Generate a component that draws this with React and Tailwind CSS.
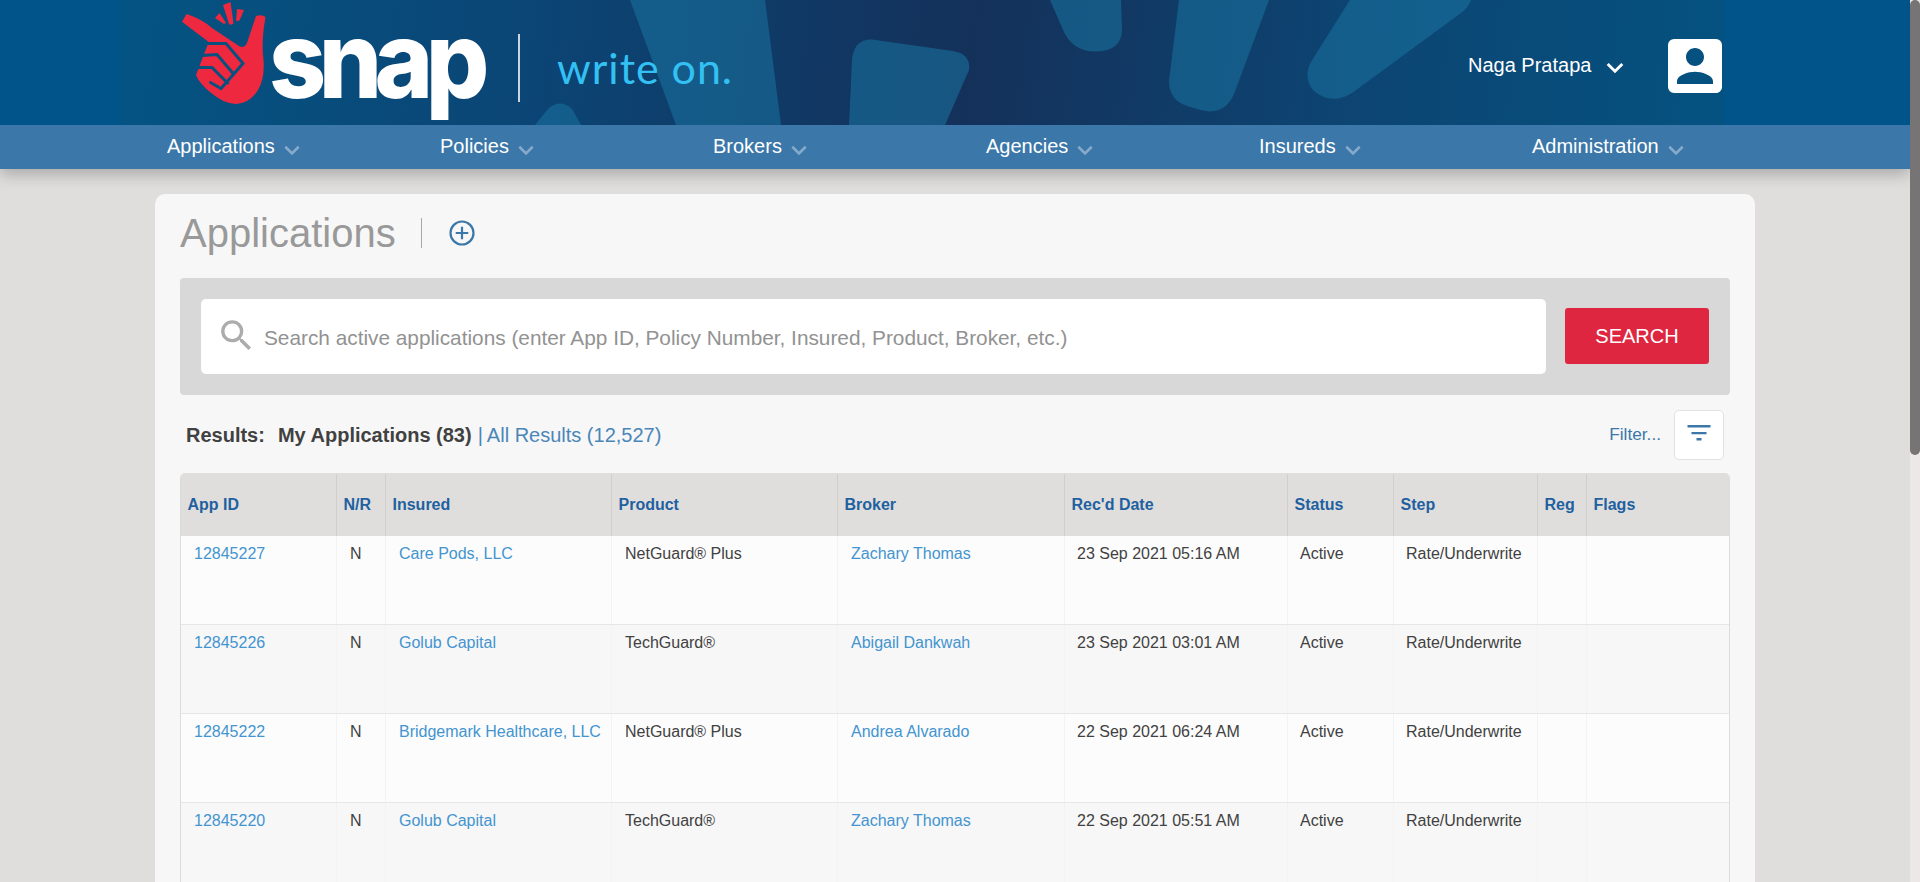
const font = "font-['Liberation_Sans',Arial,sans-serif]";

const NAV = ['Applications', 'Policies', 'Brokers', 'Agencies', 'Insureds', 'Administration'];

const COLUMNS = ['App ID', 'N/R', 'Insured', 'Product', 'Broker', "Rec'd Date", 'Status', 'Step', 'Reg', 'Flags'];

const GRID = 'grid grid-cols-[156px_49px_226px_226px_227px_223px_106px_144px_49px_1fr]';

const ROWS = [
  ['12845227', 'N', 'Care Pods, LLC', 'NetGuard® Plus', 'Zachary Thomas', '23 Sep 2021 05:16 AM', 'Active', 'Rate/Underwrite', '', ''],
  ['12845226', 'N', 'Golub Capital', 'TechGuard®', 'Abigail Dankwah', '23 Sep 2021 03:01 AM', 'Active', 'Rate/Underwrite', '', ''],
  ['12845222', 'N', 'Bridgemark Healthcare, LLC', 'NetGuard® Plus', 'Andrea Alvarado', '22 Sep 2021 06:24 AM', 'Active', 'Rate/Underwrite', '', ''],
  ['12845220', 'N', 'Golub Capital', 'TechGuard®', 'Zachary Thomas', '22 Sep 2021 05:51 AM', 'Active', 'Rate/Underwrite', '', ''],
];

const LINKED = [0, 2, 4];

function Chevron({ className }) {
  return (
    <svg viewBox="0 0 16 11" className={className} fill="none" stroke="currentColor" strokeWidth="2.6">
      <path d="M1.3 1.8 L8 8.4 L14.7 1.8" />
    </svg>
  );
}

function Backdrop() {
  return (
    <svg className="absolute inset-0 h-[125px] w-[1910px]" viewBox="0 0 1910 125">
      <g fill="#196f9c" fillOpacity="0.6">
        <path d="M630 0H765L781 125H676Z" />
        <path d="M535 125L548 109Q560 98 572 109L581 125Z" />
        <path d="M849 125L852 60Q854 39 872 39.500L953 51Q971 54 969 70L945 125Z" />
        <path d="M1050 0L1064 32Q1074 52 1096 51.500Q1122 51 1122 29L1121 0Z" />
        <path d="M1179 0L1169 81Q1169 100 1187 106Q1203 111 1210 111.500Q1227 111 1234 94L1269 0Z" />
        <path d="M1350 0L1311 62Q1303 77 1313 90Q1331 106 1352 93L1461 13Q1469 7 1471 0Z" />
      </g>
    </svg>
  );
}

function Logo() {
  return (
    <svg className="h-[125px] w-[600px] shrink-0 overflow-visible" viewBox="150 0 600 125" role="img" aria-label="snap">
      <path
        fill="#ee293f"
        d="M186.500 14L182 21.700L208.700 42L196 75Q199 83 210 92Q224 104 236 104Q250 103 258 90Q265 78 263.500 60Q261 42 265.500 17Q262 14 256 16Q252 28 247 43Q244 49 239 46L212 28Q202 19 186.500 14Z"
      />
      <g fill="#ee293f">
        <path d="M223 5L230.500 2L233.500 23.500Q231 25.500 229 24Z" />
        <path d="M215 18L219.500 13L226 23L224 24Z" />
        <path d="M237 9L244 10L239.500 20.500L236 21Z" />
      </g>
      <g fill="none" stroke="#08507e" strokeWidth="3">
        <path d="M208 43.500H226L243 63.500L221 88.500L210.500 82.500" strokeLinecap="round" />
        <path d="M202 55.500L217 54.500L234.500 75" />
        <path d="M197 67.500H212L228.500 84" />
      </g>
      <text
        x="269"
        y="97.500"
        fontFamily="Inter, sans-serif"
        fontWeight="800"
        fontSize="107"
        letterSpacing="-8"
        fill="#fff"
        textLength="213"
        lengthAdjust="spacingAndGlyphs"
      >
        snap
      </text>
      <rect x="518" y="34" width="2" height="68" fill="#c9d6e0" />
      <text x="557" y="84" fontFamily="Lato, sans-serif" fontSize="43" fill="#33c1f3" textLength="175" lengthAdjust="spacing">write on.</text>
    </svg>
  );
}

function Header() {
  return (
    <header className="relative z-10 flex h-[125px] shrink-0 bg-[#00548a] pl-[121px]">
      <div className="h-[125px] w-[1603px] bg-[linear-gradient(97deg,#045483_0%,#0b4575_26%,#14315a_53%,#0d4472_76%,#045280_100%)]" />
      <Backdrop />
      <div className="absolute inset-0 flex items-start pl-[150px]">
        <Logo />
        <span className="mt-[54px] ml-[718px] text-[20px] leading-[23px] whitespace-nowrap text-white">Naga Pratapa</span>
        <Chevron className="mt-[62px] ml-[15px] h-[12px] w-[18px] shrink-0 text-white" />
        <svg viewBox="0 0 24 24" className="mt-[30px] ml-[35px] h-[72px] w-[72px] shrink-0" fill="#fff">
          <path d="M3 5v14a2 2 0 0 0 2 2h14c1.100 0 2-.9 2-2V5a2 2 0 0 0-2-2H5a2 2 0 0 0-2 2zm12 4c0 1.660-1.340 3-3 3s-3-1.340-3-3 1.340-3 3-3 3 1.340 3 3zm-9 8c0-2 4-3.100 6-3.100s6 1.100 6 3.100v1H6v-1z" />
        </svg>
      </div>
    </header>
  );
}

function Nav() {
  return (
    <nav className="relative grid h-[44px] shrink-0 grid-cols-[repeat(6,273px)] bg-[#3b77a8] pl-[167px] shadow-[0_5px_16px_rgba(0,0,0,0.25)]">
      {NAV.map((label) => (
        <a key={label} className="flex items-start pt-[10px] text-[20px] leading-[23px] text-white">
          {label}
          <Chevron className="mt-[10px] ml-[9px] h-[11px] w-[16px] text-[#86aacb]" />
        </a>
      ))}
    </nav>
  );
}

function SearchPanel() {
  return (
    <section className="mt-[24px] flex h-[117px] items-center rounded-[4px] bg-[#d8d8d8] px-[21px]">
      <div className="flex h-[75px] flex-1 items-start rounded-[5px] bg-white pl-[15px]">
        <svg viewBox="0 0 24 24" className="mt-[16px] h-[41px] w-[41px]" fill="#acacac">
          <path d="M15.500 14h-.79l-.28-.27A6.471 6.471 0 0 0 16 9.500 6.500 6.500 0 1 0 9.500 16c1.610 0 3.090-.59 4.230-1.570l.27.28v.79l5 4.990L20.490 19l-4.990-5zm-6 0C7.010 14 5 11.990 5 9.500S7.010 5 9.500 5 14 7.010 14 9.500 11.990 14 9.500 14z" />
        </svg>
        <span className="mt-[27px] ml-[7px] text-[20.800px] leading-[24px] text-[#929292]">
          Search active applications (enter App ID, Policy Number, Insured, Product, Broker, etc.)
        </span>
      </div>
      <button className="mb-[2px] ml-[19px] h-[56px] w-[144px] rounded-[3px] bg-[#df2640] pt-[1px] text-[20px] leading-[23px] text-white">SEARCH</button>
    </section>
  );
}

function ResultsBar() {
  return (
    <section className="flex h-[78px] items-center pt-[2px] pr-[6px] pl-[6px] text-[20px] leading-[23px]">
      <b className="text-[#414141]">Results:</b>
      <b className="ml-[13px] text-[#414141]">My Applications (83)</b>
      <span className="ml-[6px] text-[#4a86b8]">|</span>
      <a className="ml-[4px] text-[#4a86b8]">All Results (12,527)</a>
      <span className="mb-[1px] ml-auto text-[17.300px] text-[#3b77a8]">Filter...</span>
      <button className="ml-[13px] flex h-[50px] w-[50px] items-center justify-center rounded-[5px] border border-[#e2e2e2] bg-white">
        <svg viewBox="0 0 24 18" className="mb-[4px] h-[18px] w-[24px]" fill="#3b77a8">
          <path d="M0.500 1H23.500V3.500H0.500ZM4.500 8H19.500V10.300H4.500ZM9.500 14H14.500V16.500H9.500Z" />
        </svg>
      </button>
    </section>
  );
}

function ResultsTable() {
  return (
    <section className="overflow-hidden rounded-t-[5px] border-x border-[#dcdcdc] bg-[#fcfcfc] text-[16px] leading-[18px]">
      <div className={`${GRID} h-[63px] bg-[#dfdedc] font-bold text-[#1f61a0]`}>
        {COLUMNS.map((name) => (
          <div key={name} className="mt-px border-r border-[#d0cfcd] pt-[22px] pl-[6.5px] last:border-r-0">
            {name}
          </div>
        ))}
      </div>
      {ROWS.map((row) => (
        <div key={row[0]} className={`${GRID} h-[89px] border-b border-[#e6e6e6] even:bg-[#fcfcfc] odd:bg-[#f7f7f7]`}>
          {row.map((value, i) => (
            <div
              key={i}
              className={`border-r border-[#f3f3f3] pt-[9px] whitespace-nowrap last:border-r-0 ${i > 4 ? 'pl-[12px]' : 'pl-[13px]'} ${LINKED.includes(i) ? 'text-[#4394d0]' : 'text-[#414141]'}`}
            >
              {value}
            </div>
          ))}
        </div>
      ))}
    </section>
  );
}

export default function App() {
  return (
    <div className={`flex h-[882px] w-[1920px] overflow-hidden bg-[#dfdedc] ${font}`}>
      <div className="flex h-full w-[1910px] flex-col overflow-hidden">
        <Header />
        <Nav />
        <main className="mt-[25px] ml-[155px] h-[800px] w-[1600px] shrink-0 rounded-t-[10px] bg-[#f7f7f7] px-[25px] pt-[17px]">
          <div className="flex h-[43px] items-center">
            <h1 className="text-[40px] leading-[46px] text-[#999999]">Applications</h1>
            <span className="ml-[25px] h-[30px] w-px bg-[#a8a8a8]" />
            <svg viewBox="0 0 26 26" className="ml-[27px] h-[26px] w-[26px]" fill="none" stroke="#3b77a8" strokeWidth="2.200">
              <circle cx="13" cy="13" r="11.500" />
              <path d="M13 6.700V19.300M6.700 13H19.300" />
            </svg>
          </div>
          <SearchPanel />
          <ResultsBar />
          <ResultsTable />
        </main>
      </div>
      <div className="h-full w-[10px] bg-[#ece8e8]">
        <div className="h-[455px] w-[10px] rounded-full bg-[#767474]" />
      </div>
    </div>
  );
}
